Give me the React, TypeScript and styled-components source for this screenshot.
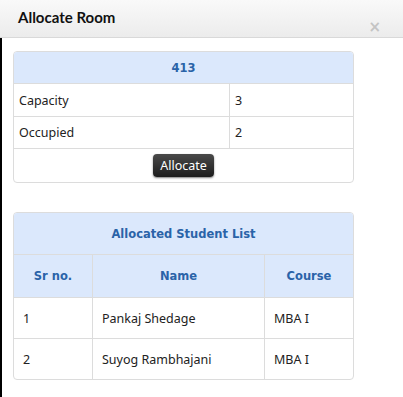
import React from 'react';
import styled, { createGlobalStyle } from 'styled-components';

const GlobalStyle = createGlobalStyle`
  html, body {
    margin: 0;
    padding: 0;
    background: #fff;
  }
  body {
    font-family: 'Noto Sans', Tahoma, sans-serif;
    font-size: 12.5px;
    color: #222;
  }
`;

const Modal = styled.div`
  width: 403px;
  height: 397px;
  display: flex;
  flex-direction: column;
  overflow: hidden;
`;

const Header = styled.div`
  height: 37px;
  flex: none;
  display: flex;
  justify-content: space-between;
  padding: 0 22px 0 18px;
  background: linear-gradient(to bottom, #f9f9f9, #ececec);
  border-bottom: 1px solid #d9d9d9;
`;

const Title = styled.h3`
  margin: 0;
  padding-top: 8px;
  font-family: Lato, sans-serif;
  font-size: 15px;
  font-weight: 700;
  color: #111;
`;

const Close = styled.span`
  padding-top: 18px;
  font-family: 'DejaVu Sans', sans-serif;
  font-size: 15px;
  font-weight: 700;
  color: #c4c4c4;
`;

const Body = styled.div`
  flex: 1;
  border-left: 2px solid #000;
  padding: 13px 0 0 11px;
  display: flex;
  flex-direction: column;
  gap: 29px;
`;

const Card = styled.div`
  box-sizing: border-box;
  width: 341px;
  border: 1px solid #dcdcdc;
  border-radius: 4px;
  overflow: hidden;
`;

const Table = styled.table`
  width: 100%;
  border-collapse: collapse;
`;

const HeadCell = styled.th<{ $h: number; $w?: number }>`
  height: ${p => p.$h}px;
  width: ${p => (p.$w ? `${p.$w}px` : 'auto')};
  padding: 0;
  background: #dbe8fc;
  color: #2a63a8;
  font-family: 'DejaVu Sans', sans-serif;
  font-size: 11.5px;
  font-weight: 700;
  text-align: center;
  border-left: 1px solid #dcdcdc;
  border-bottom: 1px solid #dcdcdc;
  &:first-child { border-left: none; }
`;

const Cell = styled.td<{ $h: number; $w?: number }>`
  height: ${p => p.$h}px;
  width: ${p => (p.$w ? `${p.$w}px` : 'auto')};
  padding: 0 0 0 ${p => (p.$h > 35 ? 9 : 5)}px;
  font-size: 12.5px;
  color: #222;
  white-space: nowrap;
  border-left: 1px solid #dcdcdc;
  border-top: 1px solid #dcdcdc;
  &:first-child { border-left: none; }
`;

const ActionCell = styled.td`
  height: 33px;
  padding: 0;
  text-align: center;
  border-top: 1px solid #dcdcdc;
`;

const Button = styled.button`
  height: 23px;
  padding: 0 7px;
  border: none;
  border-radius: 4px;
  background: linear-gradient(to bottom, #4a4a4a, #1c1c1c);
  box-shadow: 0 1px 2px rgba(0, 0, 0, 0.5);
  color: #fff;
  font-family: 'Noto Sans', Tahoma, sans-serif;
  font-size: 12.5px;
  cursor: pointer;
`;

const students = [
  { sr: 1, name: 'Pankaj Shedage', course: 'MBA I' },
  { sr: 2, name: 'Suyog Rambhajani', course: 'MBA I' },
];

const App: React.FC = () => (
  <>
    <GlobalStyle />
    <Modal>
      <Header>
        <Title>Allocate Room</Title>
        <Close>×</Close>
      </Header>
      <Body>
        <Card>
          <Table>
            <thead>
              <tr>
                <HeadCell $h={31} colSpan={2}>413</HeadCell>
              </tr>
            </thead>
            <tbody>
              <tr>
                <Cell $h={32} $w={210}>Capacity</Cell>
                <Cell $h={32}>3</Cell>
              </tr>
              <tr>
                <Cell $h={31}>Occupied</Cell>
                <Cell $h={31}>2</Cell>
              </tr>
              <tr>
                <ActionCell colSpan={2}>
                  <Button>Allocate</Button>
                </ActionCell>
              </tr>
            </tbody>
          </Table>
        </Card>
        <Card>
          <Table>
            <thead>
              <tr>
                <HeadCell $h={41} colSpan={3}>Allocated Student List</HeadCell>
              </tr>
              <tr>
                <HeadCell $h={42} $w={78}>Sr no.</HeadCell>
                <HeadCell $h={42}>Name</HeadCell>
                <HeadCell $h={42} $w={88}>Course</HeadCell>
              </tr>
            </thead>
            <tbody>
              {students.map(s => (
                <tr key={s.sr}>
                  <Cell $h={40}>{s.sr}</Cell>
                  <Cell $h={40}>{s.name}</Cell>
                  <Cell $h={40}>{s.course}</Cell>
                </tr>
              ))}
            </tbody>
          </Table>
        </Card>
      </Body>
    </Modal>
  </>
);

export default App;
